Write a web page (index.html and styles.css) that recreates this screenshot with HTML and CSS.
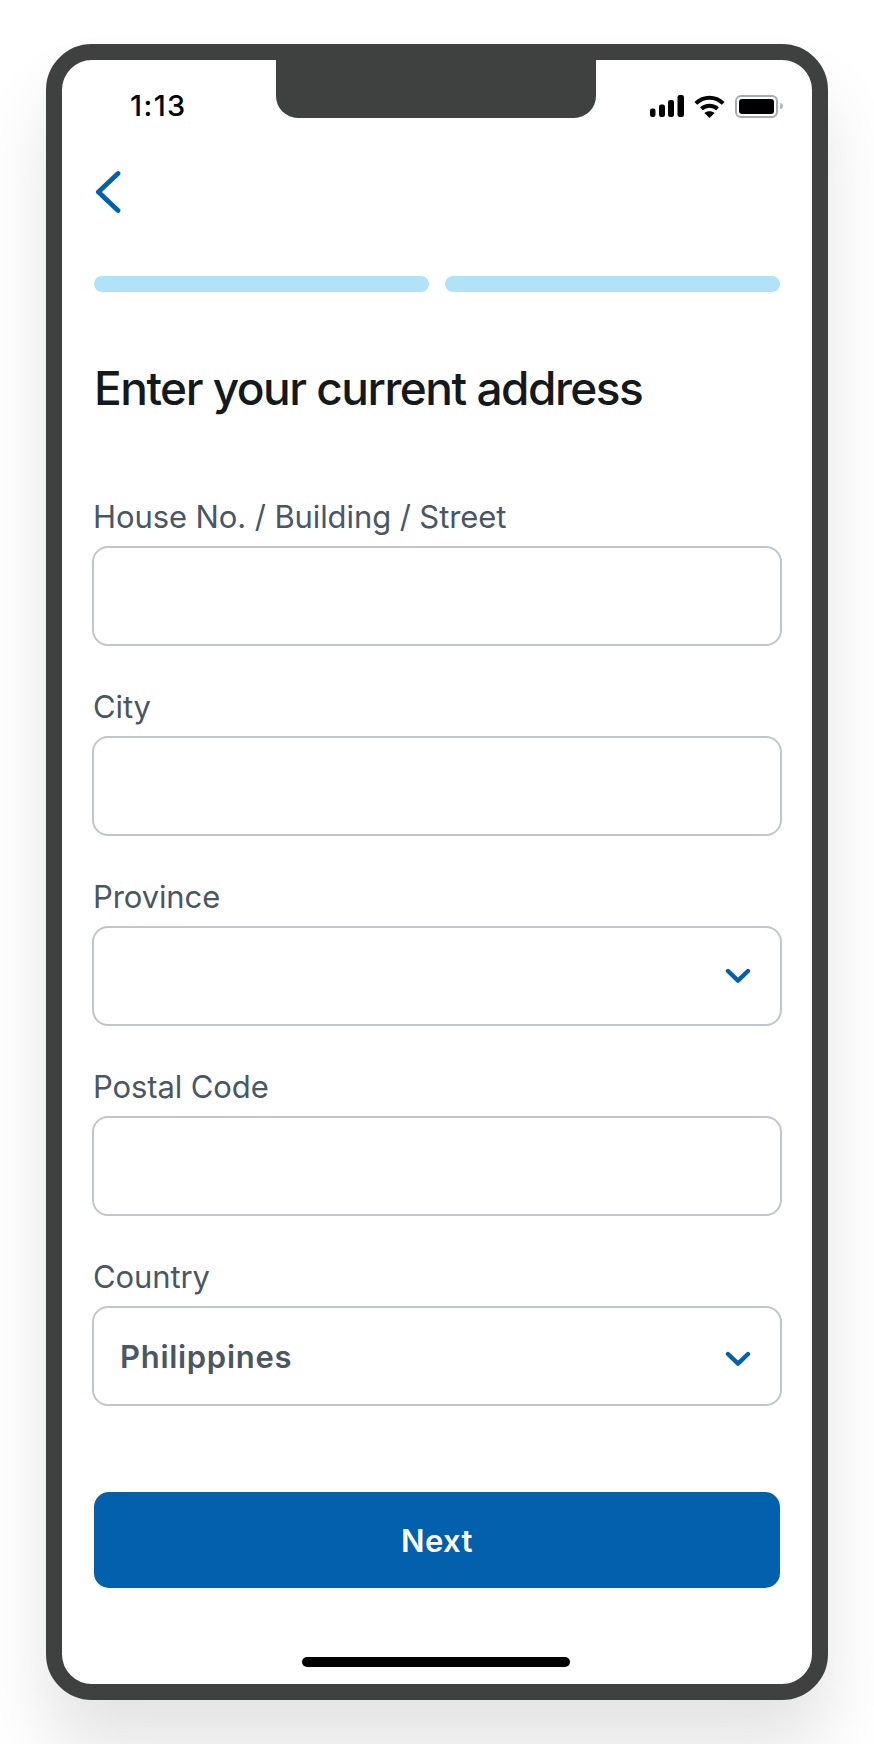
FILE: index.html
```html
<!DOCTYPE html>
<html lang="en">
<head>
<meta charset="utf-8">
<title>Enter your current address</title>
<link rel="stylesheet" href="styles.css">
</head>
<body>
<div class="phone">
  <div class="notch"></div>
  <main class="screen">
    <div class="status">
      <span class="time">1:13</span>
      <div class="status-icons">
        <svg class="signal" width="34" height="22" viewBox="0 0 34 22"><rect x="0" y="13.5" width="5.5" height="8.5" rx="2.2"/><rect x="9" y="9.5" width="6" height="12.5" rx="2.2"/><rect x="18" y="5" width="6" height="17" rx="2.2"/><rect x="27.5" y="0" width="6.5" height="22" rx="2.2"/></svg>
        <svg class="wifi" width="31" height="23" viewBox="0 0 31 23" fill="none" stroke="#000" stroke-width="4"><path d="M1.8 8.4C9.6 .8 21.4 .8 29.2 8.4"/><path d="M7.4 13.8C12 9.6 19 9.6 23.6 13.8"/><path d="M15.5 23 10.4 18C13.2 15.6 17.8 15.6 20.6 18Z" fill="#000" stroke="none"/></svg>
        <div class="battery"><div class="battery-fill"></div></div>
        <div class="battery-nub"></div>
      </div>
    </div>
    <button class="back" aria-label="Back">
      <svg width="26" height="44" viewBox="0 0 26 44" fill="none" stroke="#0360ac" stroke-width="4.8" stroke-linecap="round" stroke-linejoin="round"><path d="M23 3.5 3.4 22 23 40.5"/></svg>
    </button>
    <div class="progress"><span class="step"></span><span class="step"></span></div>
    <h1 class="title">Enter your current address</h1>
    <form class="form">
      <div class="field">
        <label class="label">House No. / Building / Street</label>
        <div class="box"></div>
      </div>
      <div class="field">
        <label class="label">City</label>
        <div class="box"></div>
      </div>
      <div class="field">
        <label class="label">Province</label>
        <div class="box">
          <svg class="chev" width="26" height="16" viewBox="0 0 26 16" fill="none" stroke="#0360ac" stroke-width="4.4" stroke-linecap="round" stroke-linejoin="round"><path d="M3 3 13 12.6 23 3"/></svg>
        </div>
      </div>
      <div class="field">
        <label class="label">Postal Code</label>
        <div class="box"></div>
      </div>
      <div class="field">
        <label class="label">Country</label>
        <div class="box">
          <span class="value">Philippines</span>
          <svg class="chev chev-low" width="26" height="16" viewBox="0 0 26 16" fill="none" stroke="#0360ac" stroke-width="4.4" stroke-linecap="round" stroke-linejoin="round"><path d="M3 3 13 12.6 23 3"/></svg>
        </div>
      </div>
    </form>
    <button class="next">Next</button>
    <div class="home"></div>
  </main>
</div>
</body>
</html>
```

FILE: styles.css
```css
* { box-sizing: border-box; }
html, body { margin: 0; padding: 0; background: #fff; }
body {
  width: 874px;
  height: 1744px;
  overflow: hidden;
  padding: 44px 0 0 46px;
  font-family: Inter, "Noto Sans", sans-serif;
}
.phone {
  position: relative;
  width: 782px;
  height: 1656px;
  border: 16px solid #3f4140;
  border-radius: 46px;
  background: #fff;
  box-shadow: 0 50px 70px rgba(0, 0, 0, .11);
}
.notch {
  position: absolute;
  top: -1px;
  left: 214px;
  width: 320px;
  height: 59px;
  background: #3f4140;
  border-radius: 0 0 22px 22px;
}
.screen {
  height: 100%;
  padding: 34px 32px 0;
  display: flex;
  flex-direction: column;
}
.status {
  height: 24px;
  display: flex;
  align-items: center;
  justify-content: space-between;
  padding-left: 36px;
  margin-right: -3px;
}
.time {
  font-size: 29px;
  font-weight: 500;
  line-height: 24px;
  color: #000;
  letter-spacing: 1.4px;
}
.status-icons { display: flex; align-items: center; }
.signal { fill: #000; margin-right: 10px; }
.wifi { margin-right: 10px; }
.battery {
  width: 43px;
  height: 23px;
  border: 2px solid #a4abb2;
  border-radius: 6px;
  padding: 2px;
}
.battery-fill { width: 100%; height: 100%; background: #000; border-radius: 3px; }
.battery-nub {
  width: 3px;
  height: 6px;
  margin-left: 2px;
  background: #b4bac0;
  border-radius: 0 3px 3px 0;
}
.back {
  align-self: flex-start;
  padding: 0;
  border: 0;
  background: none;
  display: block;
  height: 44px;
  margin: 52px 0 0 1px;
}
.back svg { display: block; }
.progress { display: flex; gap: 16px; margin-top: 62px; }
.step { flex: 1; height: 16px; border-radius: 8px; background: #b0e3f8; }
.title {
  margin: 66px 0 0;
  font-size: 46px;
  line-height: 60px;
  font-weight: 500;
  letter-spacing: -1.5px;
  color: #14191c;
}
.form { margin-top: 81px; display: flex; flex-direction: column; gap: 43px; }
.label {
  display: block;
  height: 36px;
  margin-left: -1px;
  font-size: 31px;
  line-height: 36px;
  font-weight: 400;
  color: #4a5763;
  letter-spacing: -.1px;
}
.box {
  margin: 11px -2px 0;
  height: 100px;
  border: 2px solid #c0c6cb;
  border-radius: 16px;
  padding: 0 26px;
  display: flex;
  align-items: center;
  justify-content: space-between;
  background: #fff;
}
.chev { margin-left: auto; margin-right: 3px; }
.chev-low { margin-top: 6px; }
.value { font-size: 31px; font-weight: 600; color: #4a5763; letter-spacing: .7px; }
.next {
  margin-top: 86px;
  height: 96px;
  border: 0;
  border-radius: 15px;
  background: #0360ac;
  color: #fff;
  font-family: inherit;
  font-size: 31px;
  font-weight: 600;
  letter-spacing: .4px;
}
.home {
  align-self: center;
  width: 268px;
  height: 10px;
  margin: 69px 2px 0 0;
  border-radius: 5px;
  background: #000;
}
```
